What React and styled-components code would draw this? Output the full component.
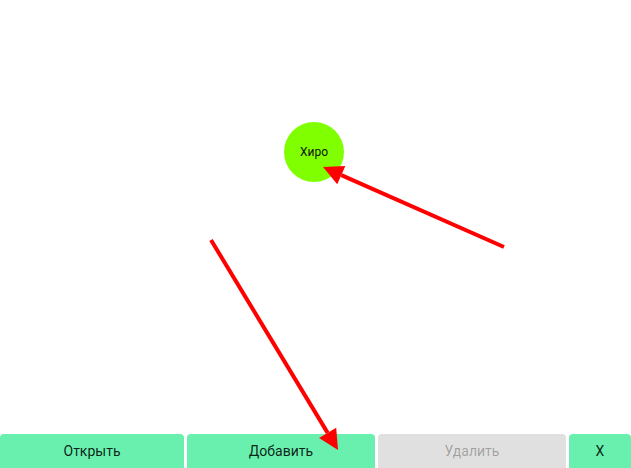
import styled, { createGlobalStyle } from 'styled-components';

const Global = createGlobalStyle`
    html, body {
        margin: 0;
        padding: 0;
        background: #fff;
        font-family: Roboto, "Noto Sans", sans-serif;
    }
`

const Page = styled.div`
    display: flex;
    flex-direction: column;
    width: 100vw;
    height: 100vh;
    overflow: hidden;
`

const Canvas = styled.div`
    position: relative;
    flex: 1;
`

const Edges = styled.svg`
    position: absolute;
    left: 0;
    top: 0;
    width: 100%;
    height: 100%;
    overflow: visible;
    z-index: 2;
    pointer-events: none;
`

const Node = styled.div`
    position: absolute;
    width: 60px;
    height: 60px;
    margin: -30px 0 0 -30px;
    border-radius: 50%;
    background: #7fff00;
    display: flex;
    align-items: center;
    justify-content: center;
    font-size: 12px;
    color: #111;
    z-index: 1;
`

const Toolbar = styled.div`
    display: grid;
    grid-template-columns: 184px 188px 188px 1fr;
    gap: 3px;
    height: 34px;
`

const Button = styled.button`
    border: none;
    border-radius: 4px 4px 0 0;
    background: ${p => p.disabled ? '#e0e0e0' : '#69f0ae'};
    color: ${p => p.disabled ? 'rgba(0,0,0,0.3)' : 'rgba(0,0,0,0.87)'};
    font-family: Roboto, "Noto Sans", sans-serif;
    font-size: 14px;
    padding: 0;
    cursor: pointer;
`

const nodes = [{ id: 1, label: 'Хиро', x: 314, y: 152 }]

const arrows = [
    { from: [504, 247], to: [323, 167] },
    { from: [211, 240], to: [338, 450] },
]

function Arrow({ from, to }) {
    const dx = to[0] - from[0]
    const dy = to[1] - from[1]
    const len = Math.hypot(dx, dy)
    const ux = dx / len
    const uy = dy / len
    const bx = to[0] - ux * 20
    const by = to[1] - uy * 20
    const px = -uy * 10
    const py = ux * 10
    return (
        <g>
            <line x1={from[0]} y1={from[1]} x2={bx} y2={by} stroke="#ff0000" strokeWidth="4" />
            <polygon points={`${to[0]},${to[1]} ${bx + px},${by + py} ${bx - px},${by - py}`} fill="#ff0000" />
        </g>
    )
}

export default function App() {
    return (
        <Page>
            <Global />
            <Canvas>
                {nodes.map(n => (
                    <Node key={n.id} style={{ left: n.x, top: n.y }}>{n.label}</Node>
                ))}
                <Edges>
                    {arrows.map((a, i) => <Arrow key={i} {...a} />)}
                </Edges>
            </Canvas>
            <Toolbar>
                <Button>Открыть</Button>
                <Button>Добавить</Button>
                <Button disabled>Удалить</Button>
                <Button>X</Button>
            </Toolbar>
        </Page>
    )
}
